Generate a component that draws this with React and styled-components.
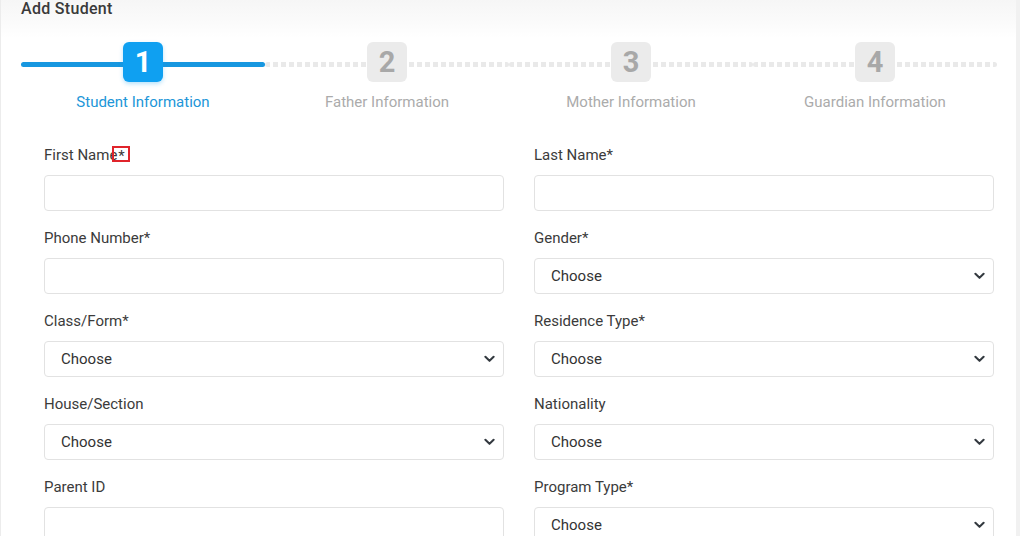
import React from 'react'
import styled, { createGlobalStyle } from 'styled-components'

const GlobalStyle = createGlobalStyle`
  body {
    margin: 0;
    background: #f1f1f1;
    font-family: Roboto, "Liberation Sans", sans-serif;
  }
`

const Card = styled.div`
  width: 1016px;
  height: 536px;
  overflow: hidden;
  background: #fff;
  border-left: 1px solid #ececec;
  box-sizing: border-box;
`

const Header = styled.div`
  height: 38px;
  padding: 0 20px;
  background: linear-gradient(180deg, #f6f6f6 0%, #fbfbfb 60%, #fff 100%);
  font-size: 16px;
  font-weight: 500;
  color: #3a3a3a;
  line-height: 17px;
  letter-spacing: 0.3px;
`

const Stepper = styled.div`
  display: grid;
  grid-template-columns: repeat(4, 244px);
  padding: 4px 0 0 20px;
`

const Step = styled.div`
  position: relative;
  display: flex;
  flex-direction: column;
  align-items: center;

  &::before {
    content: '';
    position: absolute;
    left: 0;
    right: 0;
    top: 20px;
    height: 5px;
    border-radius: 3px;
    background: ${p => p.$active
      ? '#1797e0'
      : 'repeating-linear-gradient(90deg, #e9e9e9 0 5px, transparent 5px 8px)'};
  }
`

const StepBox = styled.div`
  position: relative;
  width: 40px;
  height: 40px;
  border-radius: 6px;
  display: flex;
  align-items: center;
  justify-content: center;
  font-size: 29px;
  font-weight: 700;
  background: ${p => (p.$active ? '#0fa0f1' : '#ebebeb')};
  color: ${p => (p.$active ? '#fff' : '#a8a8a8')};
  box-shadow: ${p => (p.$active ? '0 2px 4px rgba(15,160,241,0.3)' : 'none')};
`

const StepLabel = styled.div`
  margin-top: 11px;
  font-size: 15px;
  line-height: 18px;
  color: ${p => (p.$active ? '#2196d8' : '#ababab')};
`

const Form = styled.div`
  display: grid;
  grid-template-columns: 460px 460px;
  column-gap: 30px;
  row-gap: 17px;
  padding: 34px 0 0 43px;
`

const Field = styled.div`
  display: flex;
  flex-direction: column;
`

const Label = styled.label`
  font-size: 15px;
  line-height: 20px;
  color: #3b3b3b;
  margin-bottom: 10px;
`

const Mark = styled.span`
  display: inline-flex;
  justify-content: center;
  box-sizing: border-box;
  width: 18px;
  height: 16px;
  line-height: 16px;
  margin: 1px 0 0 -5px;
  vertical-align: top;
  border: 2px solid #e0242b;
`

const Input = styled.input`
  height: 36px;
  box-sizing: border-box;
  border: 1px solid #e2e2e2;
  border-radius: 4px;
  padding: 0 16px;
  font: inherit;
  font-size: 15px;
  color: #333;
  background: #fff;
`

const Select = styled.select`
  height: 36px;
  box-sizing: border-box;
  border: 1px solid #e2e2e2;
  border-radius: 4px;
  padding: 0 16px;
  font: inherit;
  font-size: 15px;
  color: #333;
  appearance: none;
  background: #fff url("data:image/svg+xml,%3Csvg xmlns='http://www.w3.org/2000/svg' width='12' height='8' viewBox='0 0 12 8'%3E%3Cpath d='M1.5 1.5l4.5 4.5 4.5-4.5' fill='none' stroke='%23343a40' stroke-width='2.2' stroke-linecap='round' stroke-linejoin='round'/%3E%3C/svg%3E") no-repeat right 8px center / 11px 8px;
`

const steps = ['Student Information', 'Father Information', 'Mother Information', 'Guardian Information']

const fields = [
  { label: 'First Name', req: true, mark: true },
  { label: 'Last Name', req: true },
  { label: 'Phone Number', req: true },
  { label: 'Gender', req: true, select: true },
  { label: 'Class/Form', req: true, select: true },
  { label: 'Residence Type', req: true, select: true },
  { label: 'House/Section', select: true },
  { label: 'Nationality', select: true },
  { label: 'Parent ID' },
  { label: 'Program Type', req: true, select: true },
]

export default function App() {
  return (
    <>
      <GlobalStyle />
      <Card>
        <Header>Add Student</Header>
        <Stepper>
          {steps.map((s, i) => (
            <Step key={s} $active={i === 0}>
              <StepBox $active={i === 0}>{i + 1}</StepBox>
              <StepLabel $active={i === 0}>{s}</StepLabel>
            </Step>
          ))}
        </Stepper>
        <Form>
          {fields.map(f => (
            <Field key={f.label}>
              <Label>
                {f.label}
                {f.req && (f.mark ? <Mark>*</Mark> : '*')}
              </Label>
              {f.select ? (
                <Select defaultValue="">
                  <option value="">Choose</option>
                </Select>
              ) : (
                <Input type="text" />
              )}
            </Field>
          ))}
        </Form>
      </Card>
    </>
  )
}
